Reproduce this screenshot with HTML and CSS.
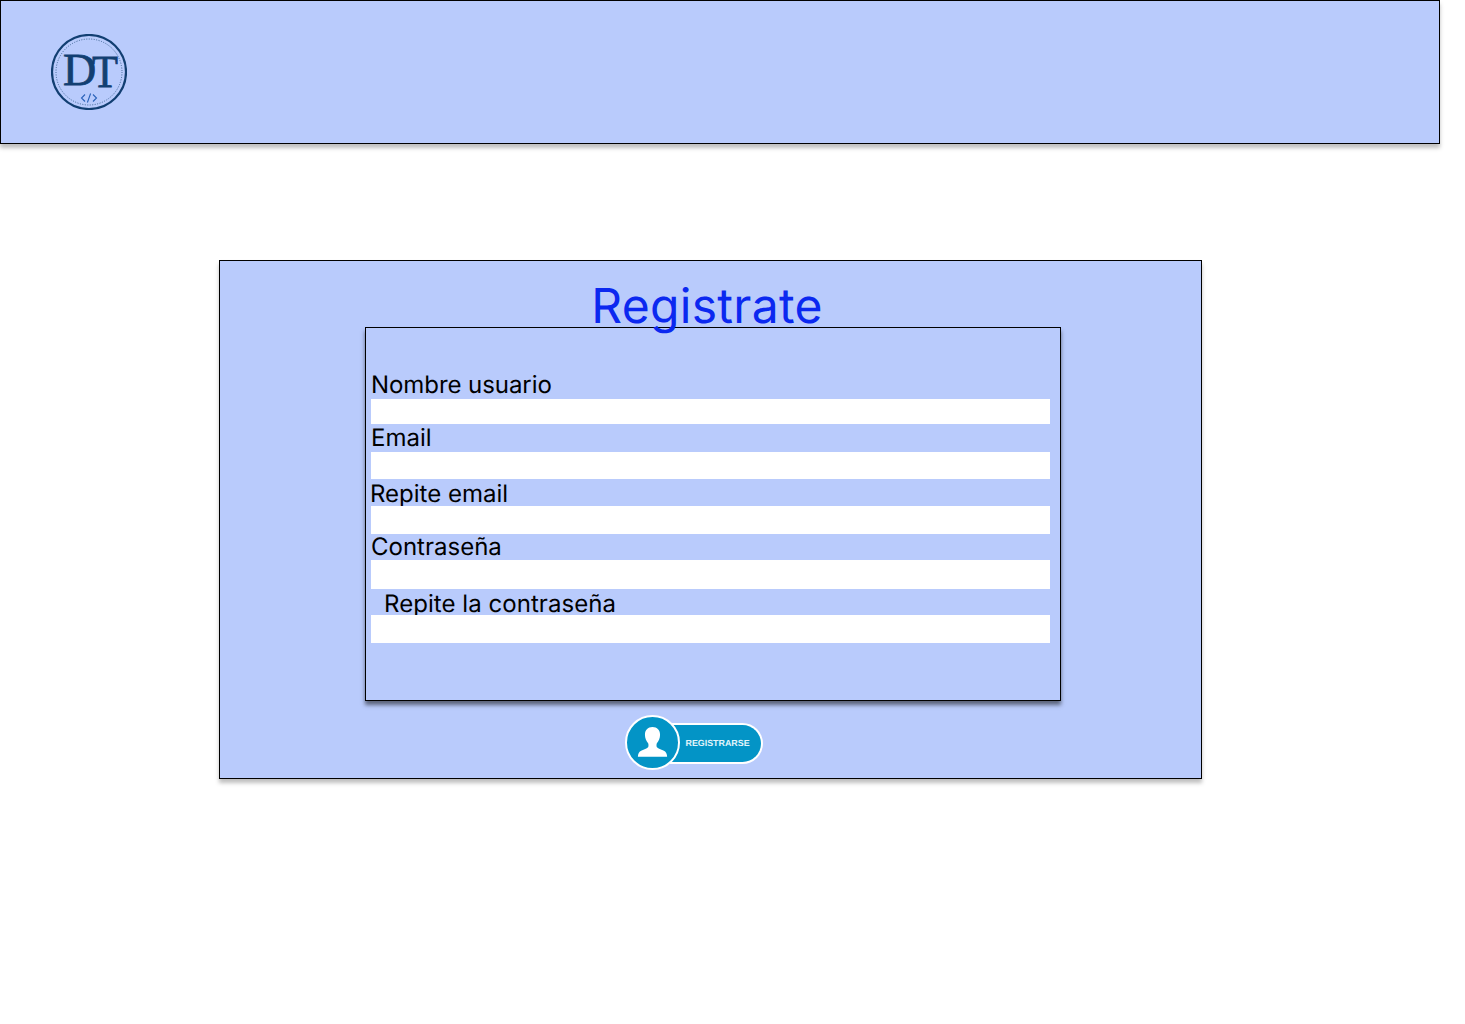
FILE: index.html
```html
<!DOCTYPE html>
<html lang="es">
<head>
<meta charset="utf-8">
<title>Registrate</title>
<link rel="stylesheet" href="styles.css">
</head>
<body>
<header class="topbar">
  <svg class="logo" viewBox="0 0 76 76" width="76" height="76" aria-label="DT">
    <circle cx="38" cy="38" r="37" fill="#b9cbfc" stroke="#123f72" stroke-width="2.200"/>
    <circle cx="38" cy="38" r="33" fill="none" stroke="#3d6493" stroke-width="1" stroke-dasharray="1 1.500"/>
    <text class="logo-d" x="12" y="51">D</text>
    <text class="logo-t" x="41" y="53" textLength="26" lengthAdjust="spacingAndGlyphs">T</text>
    <path d="M34 60.500 30.500 64 34 67.500M42 60.500 45.500 64 42 67.500M39.600 59.500 36.400 68.500" fill="none" stroke="#2a62b8" stroke-width="1.100"/>
  </svg>
</header>
<main class="card">
  <h1 class="title">Registrate</h1>
  <form class="form">
    <label class="label label-first" for="f1">Nombre usuario</label>
    <div class="field field-a" id="f1"></div>
    <label class="label label-email" for="f2">Email</label>
    <div class="field field-b" id="f2"></div>
    <label class="label label-repeat" for="f3">Repite email</label>
    <div class="field field-c" id="f3"></div>
    <label class="label label-pass" for="f4">Contraseña</label>
    <div class="field field-d" id="f4"></div>
    <label class="label label-last" for="f5">Repite la contraseña</label>
    <div class="field field-c" id="f5"></div>
  </form>
  <div class="actions">
    <div class="register">
      <span class="register-icon">
        <svg viewBox="0 0 54 54" width="54" height="54">
          <path d="M27 10c-5 0-8 3.400-8 8.200 0 3.600 1.500 6.900 3.400 9 .5 1 .5 3.400-.1 4.300-1.600 1.600-4.200 2.300-6.800 3.500-3 1.300-3.800 3.700-4 6.500h31c-.2-2.800-1-5.200-4-6.500-2.600-1.200-5.200-1.900-6.800-3.500-.6-.9-.6-3.300-.1-4.300 1.900-2.100 3.400-5.400 3.400-9 0-4.800-3-8.200-8-8.200z" fill="#fff"/>
        </svg>
      </span>
      <span class="register-text">REGISTRARSE</span>
    </div>
  </div>
</main>
</body>
</html>
```
FILE: styles.css
```css
* { box-sizing: border-box; }
html, body { margin: 0; padding: 0; background: #fff; }
body {
  font-family: Inter, "Liberation Sans", sans-serif;
  color: #000;
  height: 1024px;
  overflow: hidden;
  text-rendering: geometricPrecision;
}

.topbar {
  width: 1440px;
  height: 144px;
  background: #b9cbfc;
  border: 1px solid #000;
  box-shadow: 0 4px 4px rgba(0,0,0,.25);
  display: flex;
  align-items: center;
  padding-left: 50px;
}
.logo { display: block; }
.logo-d, .logo-t {
  font-family: "Liberation Serif", serif;
  fill: #123f72;
  stroke: #123f72;
  stroke-width: .8px;
  font-size: 46px;
}

.card {
  width: 983px;
  height: 519px;
  margin: 116px 0 0 219px;
  background: #b9cbfc;
  border: 1px solid #000;
  box-shadow: 0 4px 4px rgba(0,0,0,.25);
  display: flex;
  flex-direction: column;
}
.title {
  margin: 0;
  height: 66px;
  text-align: center;
  font-weight: 400;
  font-size: 48px;
  letter-spacing: .3px;
  line-height: 90px;
  color: #0b28f0;
  padding-right: 7px;
  white-space: nowrap;
  position: relative;
  z-index: 1;
}
.form {
  width: 696px;
  height: 374px;
  margin-left: 145px;
  background: #b9cbfc;
  border: 1px solid #000;
  box-shadow: 0 4px 4px rgba(0,0,0,.5);
  padding: 0 10px 0 5px;
  display: flex;
  flex-direction: column;
}
.label { display: block; font-size: 24px; line-height: 28px; height: 28px; white-space: nowrap; }
.label-first { margin-top: 43px; letter-spacing: -.07px; }
.label-repeat { height: 27px; line-height: 29px; margin-left: -1px; }
.label-pass { height: 26px; line-height: 26px; }
.label-last { height: 26px; line-height: 29px; padding-left: 13px; letter-spacing: .05px; }
.field { background: #fff; flex: none; }
.field-a { height: 25px; }
.field-b { height: 27px; }
.field-c { height: 28px; }
.field-d { height: 29px; }

.actions { margin: 14px 0 0 405px; }
.register { display: flex; align-items: center; width: 138px; height: 55px; }
.register-icon {
  width: 55px;
  height: 55px;
  border-radius: 50%;
  background: #0394c6;
  border: 2px solid #fff;
  display: flex;
  align-items: center;
  justify-content: center;
  position: relative;
  z-index: 1;
  flex: none;
}
.register-text {
  margin: 2px 0 0 -10px;
  width: 93px;
  height: 41px;
  background: #0394c6;
  border: 2px solid #fff;
  border-radius: 0 21px 21px 0;
  border-left: 0;
  color: #e2f5fb;
  font-family: "Liberation Sans", Arial, sans-serif;
  font-weight: 700;
  font-size: 8.900px;
  line-height: 37px;
  padding-left: 15.500px;
  white-space: nowrap;
}
```
